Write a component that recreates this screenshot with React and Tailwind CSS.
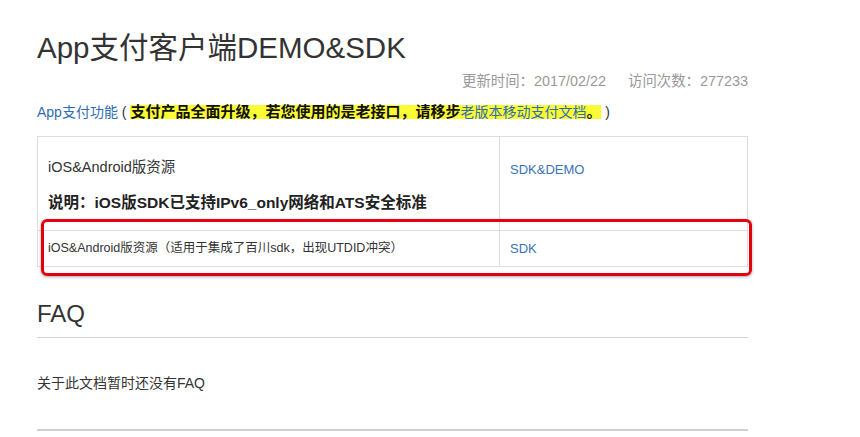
export default function App() {
    return (
        <div className="w-[860px] h-[437px] overflow-hidden bg-white font-['Liberation_Sans','Noto_Sans_CJK_SC',sans-serif] text-[#333]">
            <div className="ml-[37px] w-[711px]">
                {/* Page title */}
                <h1 className="pt-[30px] text-[29.5px] leading-[36px] font-normal text-[#333]">App支付客户端DEMO&amp;SDK</h1>

                {/* Update time & visits */}
                <div className="mt-[5px] flex justify-end gap-[22px] text-[14.4px] leading-[20px] text-[#999]">
                    <span>更新时间：2017/02/22</span>
                    <span>访问次数：277233</span>
                </div>

                <p className="mt-[11px] text-[14px] leading-[20px] text-[#333]">
                    <a className="text-[#2e6db4]">App支付功能</a>
                    {" ( "}
                    <span className="inline-block bg-[#fbfb33] text-[15px] leading-[14px] font-bold text-[#111]">
                        支付产品全面升级，若您使用的是老接口，请移步<a className="text-[14px] font-normal text-[#2e6db4]">老版本移动支付文档</a>。
                    </span>
                    {" )"}
                </p>

                {/* Resource table with the red annotation box over row 2 */}
                <div className="relative mt-[14px]">
                    <table className="w-full table-fixed border-collapse">
                        <colgroup>
                            <col className="w-[462px]" />
                            <col />
                        </colgroup>
                        <tbody>
                            <tr>
                                <td className="border border-[#ddd] align-top pl-[10px] pt-[20px] pb-[16px]">
                                    <p className="text-[14.5px] leading-[20px] text-[#333]">iOS&amp;Android版资源</p>
                                    <p className="mt-[15px] text-[15.5px] leading-[22px] font-bold text-[#222]">说明：iOS版SDK已支持IPv6_only网络和ATS安全标准</p>
                                </td>
                                <td className="border border-[#ddd] align-top pl-[10px] pt-[20px]">
                                    <a className="text-[13px] leading-[20px] text-[#3a72b8]">SDK&amp;DEMO</a>
                                </td>
                            </tr>
                            <tr>
                                <td className="border border-[#ddd] pl-[10px] py-[8px] text-[12.5px] leading-[19px] text-[#333]">
                                    iOS&amp;Android版资源（适用于集成了百川sdk，出现UTDID冲突）
                                </td>
                                <td className="border border-[#ddd] pl-[10px] py-[8px] text-[13px] leading-[19px]">
                                    <a className="text-[#3a72b8]">SDK</a>
                                </td>
                            </tr>
                        </tbody>
                    </table>
                    <div className="absolute left-[4px] top-[83px] w-[711px] h-[57px] border-[3.5px] border-[#e3000f] rounded-[6px] shadow-[0_1px_3px_rgba(0,0,0,0.35)]" />
                </div>

                {/* FAQ */}
                <h2 className="mt-[32px] pb-[8px] border-b border-[#d4d4d4] text-[24px] leading-[30px] font-normal text-[#333]">FAQ</h2>
                <p className="mt-[35px] text-[14px] leading-[20px] text-[#333]">关于此文档暂时还没有FAQ</p>
                <div className="mt-[36px] h-[2px] bg-[#d0d0d0]" />
            </div>
        </div>
    );
}
